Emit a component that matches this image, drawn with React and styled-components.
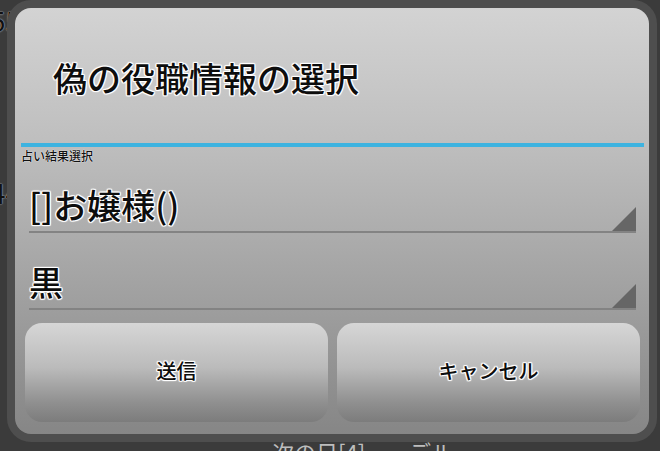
import React from "react";
import styled, { createGlobalStyle } from "styled-components";

const Global = createGlobalStyle`
  html, body { margin: 0; padding: 0; background: #3b3b3b; }
  body { font-family: "Noto Sans CJK JP", "Noto Sans", sans-serif; }
`;

const halo = `
  text-shadow: 1px 0 0 #fff, -1px 0 0 #fff, 0 1px 0 #fff, 0 -1px 0 #fff,
    1px 1px 1px #fff, -1px -1px 1px #fff, 1px -1px 1px #fff, -1px 1px 1px #fff;
`;

const Screen = styled.div`
  position: relative;
  width: 660px;
  height: 451px;
  overflow: hidden;
  background: #3b3b3b;
`;

const BackList = styled.div`
  display: flex;
  flex-direction: column;
  padding-top: 6px;
`;

const BackRow = styled.div`
  height: ${(p) => p.h}px;
  margin-left: ${(p) => p.shift || 0}px;
  font-size: 28px;
  line-height: 1;
  color: #111;
  text-shadow: 0 0 1px #bbb, 0 0 2px #aaa;
  white-space: nowrap;
`;

const BackFooter = styled.div`
  padding-left: 272px;
  font-size: 22px;
  line-height: 1;
  color: #bdbdbd;
  white-space: nowrap;
`;

const Dialog = styled.div`
  position: absolute;
  left: 7px;
  top: 0;
  width: 650px;
  height: 442px;
  box-sizing: border-box;
  border: 8px solid #4e4e4e;
  border-radius: 24px;
  background: #4e4e4e;
`;

const Panel = styled.div`
  height: 100%;
  box-sizing: border-box;
  border-radius: 16px;
  background: linear-gradient(#d3d3d3 0%, #bebebe 32%, #a0a0a0 68%, #868686 100%);
  display: flex;
  flex-direction: column;
  padding: 4px 5px 12px 6px;
`;

const Title = styled.h1`
  margin: 0;
  height: 135px;
  box-sizing: border-box;
  display: flex;
  align-items: center;
  padding-left: 32px;
  font-size: 34px;
  font-weight: 500;
  color: #0d0d0d;
  ${halo}
  border-bottom: 4px solid #3db3e0;
`;

const FieldLabel = styled.div`
  font-size: 12px;
  line-height: 14px;
  padding-top: 2px;
  font-weight: 500;
  color: #111;
  text-shadow: 0 0 1px #fff, 0 0 1px #fff;
`;

const Spinner = styled.div`
  position: relative;
  margin: 0 8px;
  height: ${(p) => p.h}px;
  box-sizing: border-box;
  display: flex;
  align-items: flex-end;
  padding-bottom: 9px;
  border-bottom: 2px solid #838383;
  font-size: 34px;
  font-weight: 500;
  line-height: 1;
  color: #0d0d0d;
  ${halo}
`;

const Corner = styled.span`
  position: absolute;
  right: 0;
  bottom: 0;
  width: 0;
  height: 0;
  border-left: 24px solid transparent;
  border-bottom: 24px solid #666;
`;

const Buttons = styled.div`
  display: grid;
  grid-template-columns: 1fr 1fr;
  gap: 9px;
  margin: 13px 4px 0 4px;
  flex: 1;
`;

const Button = styled.button`
  border: none;
  border-radius: 17px;
  background: linear-gradient(#d6d6d6 0%, #bbbbbb 45%, #909090 80%, #7c7c7c 100%);
  font-family: "Noto Sans CJK JP", sans-serif;
  font-size: 20px;
  font-weight: 500;
  color: #0d0d0d;
  ${halo}
  padding: 0 0 4px 0;
  cursor: pointer;
`;

export default function App() {
  return (
    <>
      <Global />
      <Screen>
        <BackList>
          <BackRow h={172} shift={-10}>55</BackRow>
          <BackRow h={262} shift={-10}>44</BackRow>
          <BackFooter>次の日[4]　ーデル　ー</BackFooter>
        </BackList>
        <Dialog>
          <Panel>
            <Title>偽の役職情報の選択</Title>
            <FieldLabel>占い結果選択</FieldLabel>
            <Spinner h={70}>
              []お嬢様()
              <Corner />
            </Spinner>
            <Spinner h={77}>
              黒
              <Corner />
            </Spinner>
            <Buttons>
              <Button>送信</Button>
              <Button>キャンセル</Button>
            </Buttons>
          </Panel>
        </Dialog>
      </Screen>
    </>
  );
}
